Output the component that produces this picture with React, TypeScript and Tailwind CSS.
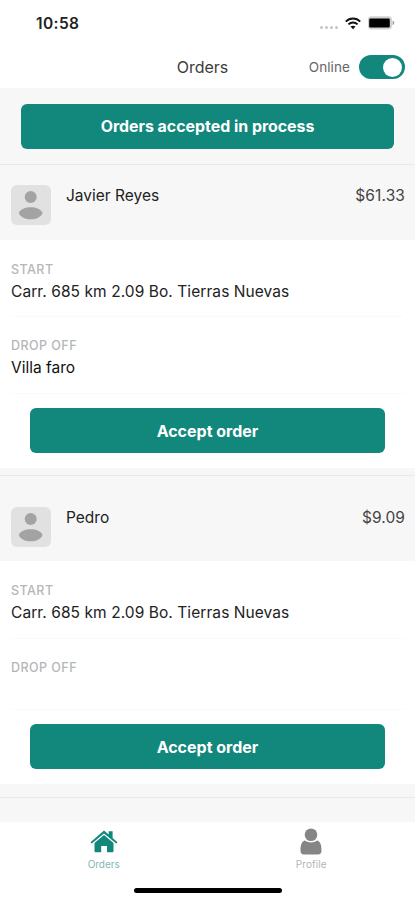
interface Order {
  id: number;
  customer: string;
  price: string;
  start: string;
  dropOff?: string;
}

const orders: Order[] = [
  {
    id: 1,
    customer: "Javier Reyes",
    price: "$61.33",
    start: "Carr. 685 km 2.09 Bo. Tierras Nuevas",
    dropOff: "Villa faro",
  },
  {
    id: 2,
    customer: "Pedro",
    price: "$9.09",
    start: "Carr. 685 km 2.09 Bo. Tierras Nuevas",
  },
];

function WifiIcon() {
  return (
    <svg width="16" height="13" viewBox="0 0 16 13" fill="none" stroke="#111" strokeWidth="1.9">
      <path d="M0.8 4.6C4.8 0.5 11.2 0.5 15.2 4.6" />
      <path d="M3.4 7.4C6 4.8 10 4.8 12.6 7.4" />
      <path d="M8 12.3L5.5 9.6C6.9 8.3 9.1 8.3 10.5 9.6Z" fill="#111" stroke="none" />
    </svg>
  );
}

function BatteryIcon() {
  return (
    <svg width="27" height="14" viewBox="0 0 27 14">
      <rect x="0" y="0.3" width="24" height="13.2" rx="3.4" fill="#d2d2d2" />
      <rect x="1.2" y="2.6" width="20.6" height="8.8" rx="1.2" fill="#000" />
      <path d="M24.6 4.6C26.8 5.4 26.8 8.4 24.6 9.2Z" fill="#999" />
    </svg>
  );
}

function AvatarIcon() {
  return (
    <svg className="shrink-0" width="40" height="40" viewBox="0 0 40 40">
      <rect width="40" height="40" rx="6" fill="#e1e1e1" />
      <circle cx="19.7" cy="12" r="6" fill="#a3a3a3" />
      <path d="M7.8 28C10.6 20.4 28.8 20.4 31.6 28C28.8 36.4 10.6 36.4 7.8 28Z" fill="#a3a3a3" />
    </svg>
  );
}

function HomeIcon() {
  return (
    <svg width="28" height="23" viewBox="0 0 28 23" fill="#12877c">
      <path d="M14 0.6L18.7 4.6V1.2H22.6V8L27.5 12.2L26.2 13.6L14 3.4L1.8 13.6L0.5 12.2Z" />
      <path d="M14 5L23.5 13V21C23.5 21.8 23 22.3 22.2 22.3H17V16H11.2V22.3H5.8C5 22.3 4.5 21.8 4.5 21V13Z" />
    </svg>
  );
}

function ProfileIcon() {
  return (
    <svg width="22" height="27" viewBox="0 0 22 27" fill="#858585">
      <circle cx="11" cy="6.8" r="6.3" />
      <path d="M4.8 12.6C8.4 15.2 13.6 15.2 17.2 12.6C20.2 13.6 21.5 17 21.5 22.5C21.5 25.2 20.4 26.5 18 26.5H4C1.6 26.5 0.5 25.2 0.5 22.5C0.5 17 1.8 13.6 4.8 12.6Z" />
    </svg>
  );
}

function StatusBar() {
  return (
    <div className="flex h-[46px] items-center justify-between pl-[36px] pr-[20px]">
      <span className="pt-[2px] text-[15.5px] font-semibold tracking-[0.4px] text-[#222]">10:58</span>
      <div className="flex items-center">
        <div className="mr-[7px] mt-[8px] flex gap-[2px]">
          <i className="size-[3px] rounded-full bg-[#c4c4c4]" />
          <i className="size-[3px] rounded-full bg-[#c4c4c4]" />
          <i className="size-[3px] rounded-full bg-[#c4c4c4]" />
          <i className="size-[3px] rounded-full bg-[#c4c4c4]" />
        </div>
        <WifiIcon />
        <div className="ml-[7px]">
          <BatteryIcon />
        </div>
      </div>
    </div>
  );
}

function Header() {
  return (
    <header className="grid h-[42px] grid-cols-[1fr_auto_1fr] items-center pr-[10px]">
      <h1 className="col-start-2 text-[16px] text-[#3c3c3c]">Orders</h1>
      <div className="flex items-center justify-end">
        <span className="text-[13.5px] tracking-[0.1px] text-[#666]">Online</span>
        <div className="ml-[9px] flex h-[24px] w-[46px] items-center justify-end rounded-full bg-[#12877c] pr-[3px]">
          <span className="size-[19px] rounded-full bg-white" />
        </div>
      </div>
    </header>
  );
}

function OrderCard({ order }: { order: Order }) {
  // cards without a destination get a taller header and a shorter drop off row
  const full = Boolean(order.dropOff);

  return (
    <section>
      <div
        className={`flex items-start border-t border-[#e9e9e9] pl-[11px] pr-[10px] ${
          full ? "h-[76px] pt-[20px]" : "h-[86px] pt-[31px]"
        }`}
      >
        <AvatarIcon />
        <span className="ml-[15px] mt-[1px] text-[15.5px] leading-[20px] text-[#222]">{order.customer}</span>
        <span className="ml-auto mt-[1px] text-[15.5px] leading-[20px] tracking-[0.1px] text-[#444]">
          {order.price}
        </span>
      </div>
      <div className="bg-white px-[11px]">
        <div className={`border-b border-[#fafafa] pt-[21px] ${full ? "h-[77px]" : "h-[78px]"}`}>
          <p className="text-[12.5px] font-medium leading-[17px] tracking-[0.45px] text-[#b5b6b9]">START</p>
          <p className="mt-[4px] text-[15.5px] leading-[20px] tracking-[0.07px] text-[#222]">{order.start}</p>
        </div>
        <div className={`border-b border-[#fafafa] pt-[20px] ${full ? "h-[77px]" : "h-[71px]"}`}>
          <p className="text-[12.5px] font-medium leading-[17px] tracking-[0.45px] text-[#b5b6b9]">DROP OFF</p>
          {full && <p className="mt-[4px] text-[15.5px] leading-[20px] text-[#111]">{order.dropOff}</p>}
        </div>
        <div className="px-[19px] pb-[15px] pt-[14px]">
          <button className="h-[45px] w-full rounded-[6px] bg-[#12877c] text-[16px] font-bold text-white">
            Accept order
          </button>
        </div>
      </div>
    </section>
  );
}

function TabBar() {
  return (
    <nav className="h-[78px] shrink-0 bg-white">
      <div className="grid h-[66px] grid-cols-2">
        <div className="flex flex-col items-center pt-[8px]">
          <HomeIcon />
          <span className="mt-[5px] text-[10px] leading-[12px] text-[#7fb8b1]">Orders</span>
        </div>
        <div className="flex flex-col items-center pt-[6px]">
          <ProfileIcon />
          <span className="mt-[3px] text-[10px] leading-[12px] tracking-[0.1px] text-[#b5b5b5]">Profile</span>
        </div>
      </div>
      <div className="mx-auto h-[5px] w-[148px] rounded-full bg-black" />
    </nav>
  );
}

export default function App() {
  return (
    <div className="flex h-[900px] w-[415px] flex-col overflow-hidden bg-white font-['Inter',sans-serif]">
      <StatusBar />
      <Header />
      <main className="min-h-0 flex-1 overflow-hidden bg-[#f7f7f7]">
        <div className="h-[76px] px-[21px] pt-[16px]">
          <button className="h-[45px] w-full rounded-[6px] bg-[#12877c] text-[15.9px] font-bold text-white">
            Orders accepted in process
          </button>
        </div>
        <OrderCard order={orders[0]} />
        <div className="h-[7px]" />
        <OrderCard order={orders[1]} />
        <div className="mt-[13px] border-t border-[#e9e9e9]" />
      </main>
      <TabBar />
    </div>
  );
}
